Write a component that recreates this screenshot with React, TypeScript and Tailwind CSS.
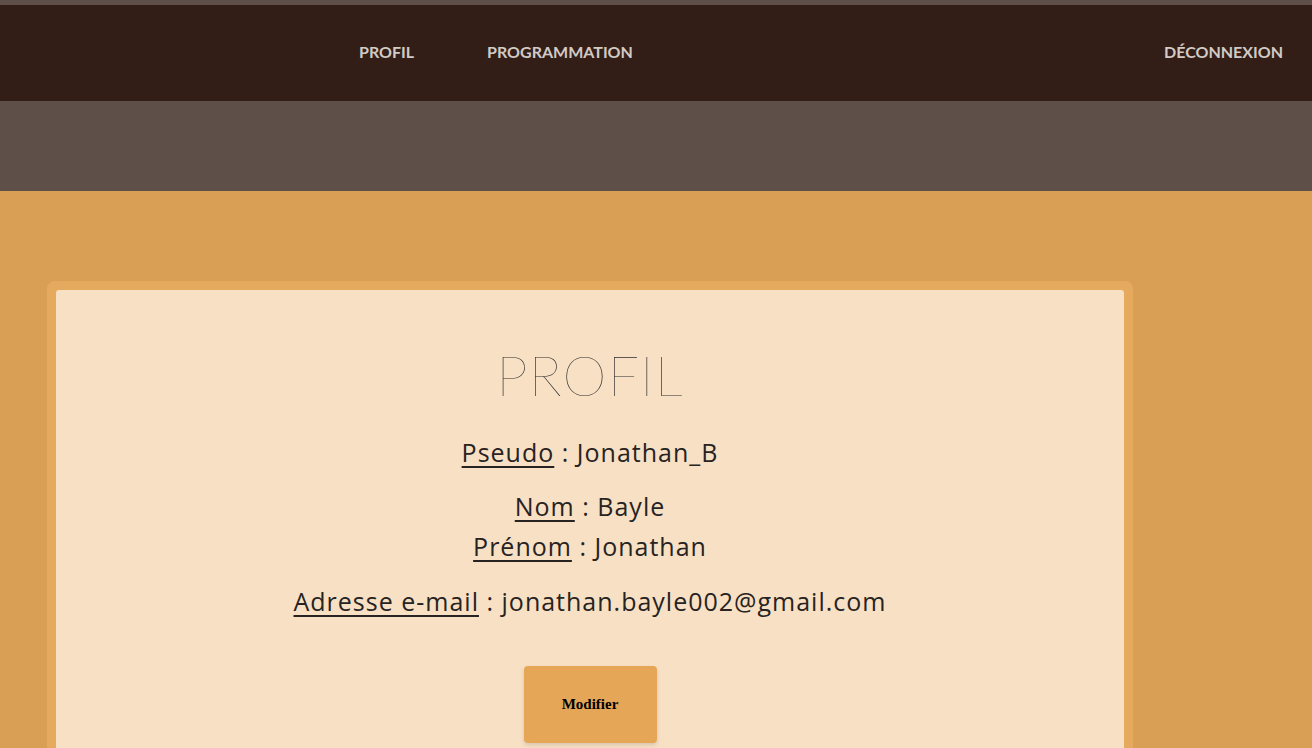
import React from 'react';

const navLinks = [
  { label: 'Profil', href: '#profil' },
  { label: 'Programmation', href: '#programmation' },
];

export default function App() {
  return (
    <div className="min-h-screen bg-[#d9a055] font-['Open_Sans',sans-serif] text-[#272322]">
      {/* Header */}
      <header className="border-t-[5px] border-[#5e5049] bg-[#331e17]">
        <nav className="h-24 flex items-center pl-[359px] pr-[29px] font-['Lato',sans-serif] text-[16px] font-bold uppercase text-[#d2cac5]">
          <ul className="flex items-center gap-[73px] -mt-[2px]">
            {navLinks.map((link) => (
              <li key={link.label}>
                <a href={link.href}>{link.label}</a>
              </li>
            ))}
          </ul>
          <a href="#logout" className="ml-auto -mt-[2px]">Déconnexion</a>
        </nav>
      </header>
      <div className="h-[90px] bg-[#5e5049]" />

      {/* Main */}
      <main className="pt-[90px] pl-[47px]">
        <section className="w-[1086px] rounded-lg border-[9px] border-[#e6aa5e] bg-[#e6aa5e]">
          <div className="rounded-[3px] bg-[#f7e0c4] pt-[57px] pb-10 flex flex-col items-center text-center tracking-[1px]">
            <h1 className="font-['Lato',sans-serif] text-[56px] leading-none font-thin tracking-[1px] text-[#2b2b2b] mb-[29px]">PROFIL</h1>
            <p className="text-[25px] leading-[40px]">
              <span className="underline underline-offset-[4px] decoration-[2px]">Pseudo</span> : Jonathan_B
            </p>
            <div className="mt-[14px]">
              <p className="text-[25px] leading-[40px]">
                <span className="underline underline-offset-[4px] decoration-[2px]">Nom</span> : Bayle
              </p>
              <p className="text-[25px] leading-[41px]">
                <span className="underline underline-offset-[4px] decoration-[2px]">Prénom</span> : Jonathan
              </p>
            </div>
            <p className="mt-[14px] text-[25px] leading-[40px]">
              <span className="underline underline-offset-[4px] decoration-[2px]">Adresse e-mail</span> : jonathan.bayle002@gmail.com
            </p>
            <button className="mt-[45px] w-[133px] h-[77px] rounded-[4px] bg-[#e6a657] shadow-[0_2px_4px_rgba(0,0,0,0.12)] font-['Liberation_Serif',serif] text-[15px] font-bold tracking-normal text-black">
              Modifier
            </button>
          </div>
        </section>
      </main>
    </div>
  );
}
